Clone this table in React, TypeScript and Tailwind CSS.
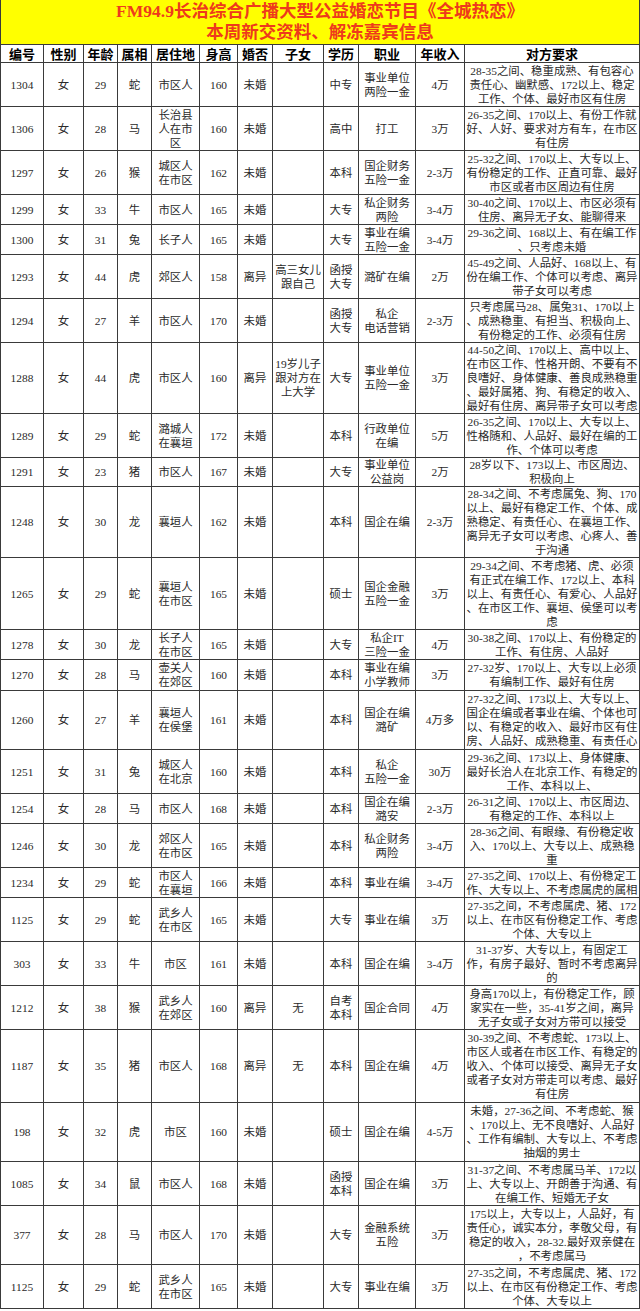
import React from "react";

type Row = {
  h: string;
  c: string[];
};

const rows: Row[] = [
  { h: "h-[44px]", c: ["1304", "女", "29", "蛇", "市区人", "160", "未婚", "", "中专", "事业单位\n两险一金", "4万", "28-35之间、稳重成熟、有包容心\n责任心、幽默感、172以上、稳定\n工作、个体、最好市区有住房"] },
  { h: "h-[44px]", c: ["1306", "女", "28", "马", "长治县\n人在市\n区", "160", "未婚", "", "高中", "打工", "3万", "26-35之间、170以上、有份工作就\n好、人好、要求对方有车，在市区\n有住房"] },
  { h: "h-[44px]", c: ["1297", "女", "26", "猴", "城区人\n在市区", "162", "未婚", "", "本科", "国企财务\n五险一金", "2-3万", "25-32之间、170以上、大专以上、\n有份稳定的工作、正直可靠、最好\n市区或者市区周边有住房"] },
  { h: "h-[30px]", c: ["1299", "女", "33", "牛", "市区人", "165", "未婚", "", "大专", "私企财务\n两险", "3-4万", "30-40之间、170以上、市区必须有\n住房、离异无子女、能聊得来"] },
  { h: "h-[30px]", c: ["1300", "女", "31", "兔", "长子人", "165", "未婚", "", "大专", "事业在编\n五险一金", "3-4万", "29-36之间、168以上、有在编工作\n、只考虑未婚"] },
  { h: "h-[44px]", c: ["1293", "女", "44", "虎", "郊区人", "158", "离异", "高三女儿\n跟自己", "函授\n大专", "潞矿在编", "2万", "45-49之间、人品好、168以上、有\n份在编工作、个体可以考虑、离异\n带子女可以考虑"] },
  { h: "h-[44px]", c: ["1294", "女", "27", "羊", "市区人", "170", "未婚", "", "函授\n大专", "私企\n电话营销", "2-3万", "只考虑属马28、属兔31、170以上\n、成熟稳重、有担当、积极向上、\n有份稳定的工作、必须有住房"] },
  { h: "h-[71px]", c: ["1288", "女", "44", "虎", "市区人", "160", "离异", "19岁儿子\n跟对方在\n上大学", "大专", "事业单位\n五险一金", "3万", "44-50之间、170以上、高中以上、\n在市区工作、性格开朗、不要有不\n良嗜好、身体健康、善良成熟稳重\n、最好属猪、狗、有稳定的收入、\n最好有住房、离异带子女可以考虑"] },
  { h: "h-[44px]", c: ["1289", "女", "29", "蛇", "潞城人\n在襄垣", "172", "未婚", "", "本科", "行政单位\n在编", "5万", "26-35之间、170以上、大专以上、\n性格随和、人品好、最好在编的工\n作、个体可以考虑"] },
  { h: "h-[29px]", c: ["1291", "女", "23", "猪", "市区人", "167", "未婚", "", "大专", "事业单位\n公益岗", "2万", "28岁以下、173以上、市区周边、\n积极向上"] },
  { h: "h-[71px]", c: ["1248", "女", "30", "龙", "襄垣人", "162", "未婚", "", "本科", "国企在编", "2-3万", "28-34之间、不考虑属兔、狗、170\n以上、最好有稳定工作、个体、成\n熟稳定、有责任心、在襄垣工作、\n离异无子女可以考虑、心疼人、善\n于沟通"] },
  { h: "h-[72px]", c: ["1265", "女", "29", "蛇", "襄垣人\n在市区", "165", "未婚", "", "硕士", "国企金融\n五险一金", "3万", "29-34之间、不考虑猪、虎、必须\n有正式在编工作、172以上、本科\n以上、有责任心、有爱心、人品好\n、在市区工作、襄垣、侯堡可以考\n虑"] },
  { h: "h-[30px]", c: ["1278", "女", "30", "龙", "长子人\n在市区", "165", "未婚", "", "大专", "私企IT\n三险一金", "4万", "30-38之间、170以上、有份稳定的\n工作、有住房、人品好"] },
  { h: "h-[31px]", c: ["1270", "女", "28", "马", "壶关人\n在郊区", "160", "未婚", "", "本科", "事业在编\n小学教师", "3万", "27-32岁、170以上、大专以上必须\n有编制工作、最好有住房"] },
  { h: "h-[59px]", c: ["1260", "女", "27", "羊", "襄垣人\n在侯堡", "161", "未婚", "", "本科", "国企在编\n潞矿", "4万多", "27-32之间、173以上、大专以上、\n国企在编或者事业在编、个体也可\n以、有稳定的收入、最好市区有住\n房、人品好、成熟稳重、有责任心"] },
  { h: "h-[44px]", c: ["1251", "女", "31", "兔", "城区人\n在北京", "160", "未婚", "", "本科", "私企\n五险一金", "30万", "29-36之间、173以上、身体健康、\n最好长治人在北京工作、有稳定的\n工作、本科以上、"] },
  { h: "h-[30px]", c: ["1254", "女", "28", "马", "市区人", "168", "未婚", "", "本科", "国企在编\n潞安", "2-3万", "26-31之间、170以上、市区周边、\n有稳定的工作、本科以上"] },
  { h: "h-[44px]", c: ["1246", "女", "30", "龙", "郊区人\n在市区", "165", "未婚", "", "本科", "私企财务\n两险", "3-4万", "28-36之间、有眼缘、有份稳定收\n入、170以上、大专以上、成熟稳\n重"] },
  { h: "h-[30px]", c: ["1234", "女", "29", "蛇", "市区人\n在襄垣", "166", "未婚", "", "本科", "事业在编", "3-4万", "27-35之间、170以上、有份稳定工\n作、大专以上、不考虑属虎的属相"] },
  { h: "h-[44px]", c: ["1125", "女", "29", "蛇", "武乡人\n在市区", "165", "未婚", "", "大专", "事业在编", "3万", "27-35之间，不考虑属虎、猪、172\n以上、在市区有份稳定工作、考虑\n个体、大专以上"] },
  { h: "h-[44px]", c: ["303", "女", "33", "牛", "市区", "161", "未婚", "", "本科", "国企在编", "3-4万", "31-37岁、大专以上，有固定工\n作，有房子最好、暂时不考虑离异\n的"] },
  { h: "h-[44px]", c: ["1212", "女", "38", "猴", "武乡人\n在郊区", "160", "离异", "无", "自考\n本科", "国企合同", "4万", "身高170以上，有份稳定工作，顾\n家实在一些，35-41岁之间，离异\n无子女或子女对方带可以接受"] },
  { h: "h-[73px]", c: ["1187", "女", "35", "猪", "市区人", "168", "离异", "无", "本科", "国企在编", "4万", "30-39之间、不考虑蛇、173以上、\n市区人或者在市区工作、有稳定的\n收入、个体可以接受、离异无子女\n或者子女对方带走可以考虑、最好\n有住房"] },
  { h: "h-[59px]", c: ["198", "女", "32", "虎", "市区", "160", "未婚", "", "硕士", "国企在编", "4-5万", "未婚，27-36之间、不考虑蛇、猴\n、170以上、无不良嗜好、人品好\n、工作有编制、大专以上、不考虑\n抽烟的男士"] },
  { h: "h-[44px]", c: ["1085", "女", "34", "鼠", "市区人", "168", "未婚", "", "函授\n本科", "国企在编", "3万", "31-37之间、不考虑属马羊、172以\n上、大专以上、开朗善于沟通、有\n在编工作、短婚无子女"] },
  { h: "h-[59px]", c: ["377", "女", "28", "马", "市区人", "170", "未婚", "", "大专", "金融系统\n五险", "3万", "175以上，大专以上，人品好，有\n责任心，诚实本分，孝敬父母，有\n稳定的收入，28-32.最好双亲健在\n，不考虑属马"] },
  { h: "h-[44px]", c: ["1125", "女", "29", "蛇", "武乡人\n在市区", "165", "未婚", "", "大专", "事业在编", "3万", "27-35之间，不考虑属虎、猪、172\n以上、在市区有份稳定工作、考虑\n个体、大专以上"] },
];

const headers = ["编号", "性别", "年龄", "属相", "居住地", "身高", "婚否", "子女", "学历", "职业", "年收入", "对方要求"];

const gridCols =
  "grid grid-cols-[43px_40px_34px_34px_48px_38px_35px_51px_35px_57px_49px_175px] border-l border-[#3a3a3a]";

export default function App() {
  return (
    <div className="w-[640px] h-[1311px] overflow-hidden bg-white font-['Liberation_Serif','Noto_Sans_CJK_SC',serif]">
      <div className="h-[45px] bg-[#ffff00] border-b border-l border-r border-[#3a3a3a] text-center text-[#ee3a1c] font-bold text-[17.5px] leading-[21px] pt-[1px] font-['Liberation_Serif','Noto_Sans_CJK_SC',sans-serif]">
        <div className="whitespace-nowrap">FM94.9长治综合广播大型公益婚恋节目《全城热恋》</div>
        <div className="whitespace-nowrap">本周新交资料、解冻嘉宾信息</div>
      </div>
      <div className={`${gridCols} h-[18px]`}>
        {headers.map((t, i) => (
          <div
            key={i}
            className="flex items-center justify-center border-r border-b border-[#3a3a3a] text-[13px] leading-[16px] font-bold text-black whitespace-nowrap overflow-hidden font-['Noto_Sans_CJK_SC',sans-serif]"
          >
            {t}
          </div>
        ))}
      </div>
      {rows.map((r, ri) => (
        <div key={ri} className={`${gridCols} ${r.h}`}>
          {r.c.map((t, i) => (
            <div
              key={i}
              className="flex items-center justify-center text-center border-r border-b border-[#3a3a3a] text-[11.4px] leading-[14px] text-[#2a2a2a] whitespace-pre overflow-hidden"
            >
              {t}
            </div>
          ))}
        </div>
      ))}
    </div>
  );
}
